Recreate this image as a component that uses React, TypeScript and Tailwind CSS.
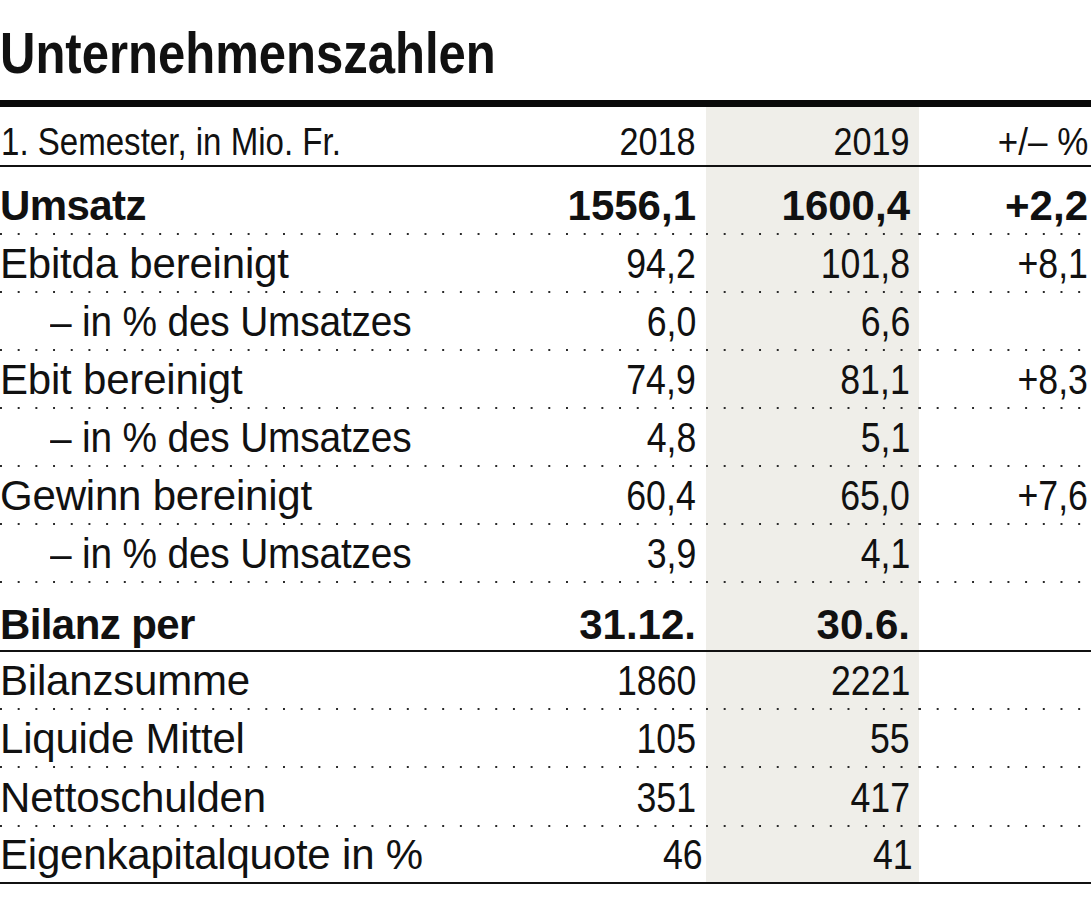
import React from "react";

type Row = {
  label: string;
  a: string;
  b: string;
  c?: string;
  bold?: boolean;
  indent?: boolean;
  h: string;
  pb: string;
  divider: "dots" | "solid";
  padA?: string;
  padB?: string;
};

const rows: Row[] = [
  { label: "Umsatz", a: "1556,1", b: "1600,4", c: "+2,2", bold: true, h: "h-[66px]", pb: "pb-[6px]", divider: "dots" },
  { label: "Ebitda bereinigt", a: "94,2", b: "101,8", c: "+8,1", h: "h-[56px]", pb: "pb-[6px]", divider: "dots" },
  { label: "– in % des Umsatzes", a: "6,0", b: "6,6", indent: true, h: "h-[56px]", pb: "pb-[6px]", divider: "dots" },
  { label: "Ebit bereinigt", a: "74,9", b: "81,1", c: "+8,3", h: "h-[56px]", pb: "pb-[6px]", divider: "dots" },
  { label: "– in % des Umsatzes", a: "4,8", b: "5,1", indent: true, h: "h-[56px]", pb: "pb-[6px]", divider: "dots" },
  { label: "Gewinn bereinigt", a: "60,4", b: "65,0", c: "+7,6", h: "h-[56px]", pb: "pb-[6px]", divider: "dots" },
  { label: "– in % des Umsatzes", a: "3,9", b: "4,1", indent: true, h: "h-[56px]", pb: "pb-[6px]", divider: "dots" },
  { label: "Bilanz per", a: "31.12.", b: "30.6.", bold: true, h: "h-[67px]", pb: "pb-[4px]", divider: "solid" },
  { label: "Bilanzsumme", a: "1860", b: "2221", h: "h-[56px]", pb: "pb-[6px]", divider: "dots" },
  { label: "Liquide Mittel", a: "105", b: "55", h: "h-[56px]", pb: "pb-[6px]", divider: "dots" },
  { label: "Nettoschulden", a: "351", b: "417", h: "h-[57px]", pb: "pb-[6px]", divider: "dots" },
  { label: "Eigenkapitalquote in %", a: "46", b: "41", h: "h-[55px]", pb: "pb-[6px]", divider: "solid", padA: "pr-[3px]", padB: "pr-[6px]" },
];

const sans = "font-['Liberation_Sans',Arial,sans-serif]";

const dots =
  "h-[2px] bg-[linear-gradient(to_right,#2a2a2a_2px,transparent_2px)] bg-[length:17.7px_2px] bg-repeat-x";

const Divider = ({ kind }: { kind: "dots" | "solid" }) => {
  if (kind === "solid") return <div className="h-[2px] bg-[#111]" />;
  return (
    <div className="grid grid-cols-[706px_213px_172px]">
      <div className={dots} />
      <div className={`${dots} bg-[#efeee9]`} />
      <div className={dots} />
    </div>
  );
};

// condensed figures: Liberation Sans squeezed to the narrow width of the print face
const Num = ({ value, bold }: { value: string; bold?: boolean }) =>
  bold ? (
    <span className="font-bold">{value}</span>
  ) : (
    <span className="inline-block origin-right scale-x-[0.85]">{value}</span>
  );

const TableRow = ({ row }: { row: Row }) => {
  const cell = `flex items-end ${row.pb} text-[42px] leading-none text-[#111] ${sans}`;

  return (
    <>
      <div className={`grid grid-cols-[556px_150px_213px_172px] ${row.h}`}>
        <div className={`${cell} whitespace-nowrap ${row.indent ? "pl-[50px]" : "pl-0"}`}>
          {row.bold ? (
            <span className="font-bold tracking-[-0.6px]">{row.label}</span>
          ) : row.indent ? (
            <span className="inline-block origin-left scale-x-[0.925] tracking-[-0.2px]">{row.label}</span>
          ) : (
            <span className="tracking-[-0.2px]">{row.label}</span>
          )}
        </div>
        <div className={`${cell} justify-end ${row.padA ?? "pr-[10px]"}`}>
          <Num value={row.a} bold={row.bold} />
        </div>
        <div className={`${cell} justify-end bg-[#efeee9] ${row.padB ?? "pr-[9px]"}`}>
          <Num value={row.b} bold={row.bold} />
        </div>
        <div className={`${cell} justify-end pr-[3px]`}>
          {row.c && <Num value={row.c} bold={row.bold} />}
        </div>
      </div>
      <Divider kind={row.divider} />
    </>
  );
};

export default function App() {
  return (
    <div className="w-[1091px] h-[906px] bg-white text-[#111]">
      <div className="h-[100px] flex items-end pb-[18px]">
        <h1 className={`${sans} font-bold text-[57px] leading-none whitespace-nowrap`}>
          <span className="inline-block origin-left scale-x-[0.86]">Unternehmenszahlen</span>
        </h1>
      </div>
      <div className="h-[7px] bg-[#0a0a0a]" />

      <div className={`grid grid-cols-[556px_150px_213px_172px] h-[58px] ${sans} text-[38px] leading-none`}>
        <div className="flex items-end pb-[4px] pl-[1px] whitespace-nowrap">
          <span className="inline-block origin-left scale-x-[0.87]">1. Semester, in Mio. Fr.</span>
        </div>
        <div className="flex items-end justify-end pb-[4px] pr-[10px]">
          <span className="inline-block origin-right scale-x-[0.9]">2018</span>
        </div>
        <div className="flex items-end justify-end pb-[4px] pr-[9px] bg-[#efeee9]">
          <span className="inline-block origin-right scale-x-[0.9]">2019</span>
        </div>
        <div className="flex items-end justify-end pb-[4px] pr-[3px]">
          <span className="inline-block origin-right scale-x-[0.92]">+/– %</span>
        </div>
      </div>
      <Divider kind="solid" />

      {rows.map((row, i) => (
        <TableRow key={i} row={row} />
      ))}
    </div>
  );
}
